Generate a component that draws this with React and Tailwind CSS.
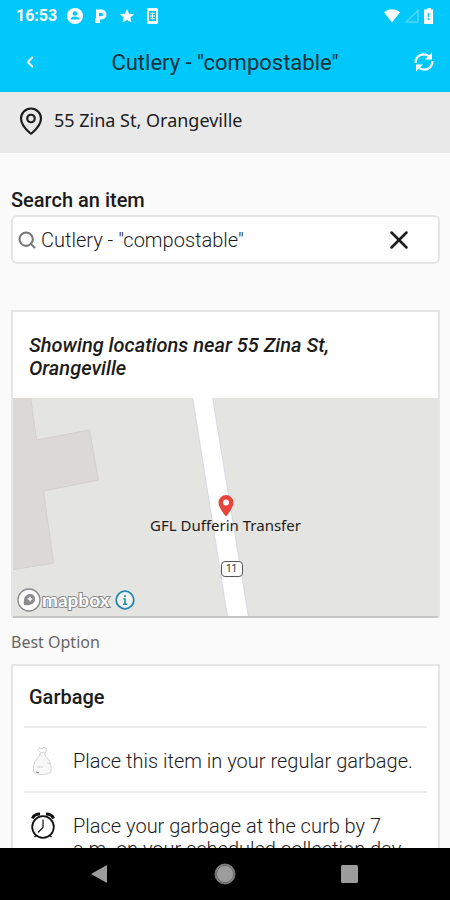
import React, { useState } from 'react';
import { ChevronLeft, MapPin, Search, X } from 'lucide-react';

const address = '55 Zina St, Orangeville';

const steps = [
    { id: 'bag', icon: <BagIcon />, text: 'Place this item in your regular garbage.' },
    { id: 'time', icon: <ClockIcon />, text: 'Place your garbage at the curb by 7 a.m. on your scheduled collection day.' },
];

function BagIcon() {
    return (
        <svg width="28" height="32" viewBox="0 0 28 32" fill="none" stroke="#d2d2d2" strokeWidth="1" aria-hidden="true">
            <path d="M11 7C9 5 9 3 11 3l2 1 2-2 3 2-2 4" />
            <path d="M11 8c1 3-4 5-6 11-1 4-1 8 1 9 4 2 11 2 15 0 2-2 1-7 0-10-1-4-6-7-5-10-2-1-3-1-5 0z" fill="#f8f8f8" />
            <path d="M8 22h6M18 18l3 1" />
            <path d="M7 27l3 1" stroke="#8f8f8f" />
        </svg>
    );
}

function ClockIcon() {
    return (
        <svg width="28" height="32" viewBox="0 0 28 32" fill="none" stroke="#111" strokeWidth="1.800" aria-hidden="true">
            <circle cx="14" cy="17" r="10.800" />
            <path d="M14 9.500v8l-5 5" strokeWidth="1.200" />
            <path d="M3.500 8.500c1-3 4-4.500 7.500-4.500M24.500 8.500c-1-3-4-4.500-7.500-4.500" strokeWidth="3" />
            <path d="M7 25.500l-1.500 1.500M21 25.500l1.500 1.500" strokeWidth="1.300" />
        </svg>
    );
}

function StatusBar() {
    return (
        <div className="flex h-8 items-center justify-between px-4 text-white">
            <div className="flex items-center gap-3">
                <span className="w-[39px] text-base font-bold">16:53</span>
                <svg width="16" height="16" viewBox="0 0 16 16" aria-hidden="true">
                    <circle cx="8" cy="8" r="8" fill="#fff" />
                    <circle cx="8" cy="5.500" r="2.300" fill="#00c8fa" />
                    <path d="M3.500 11.500c0-2 2-3 4.500-3s4.500 1 4.500 3z" fill="#00c8fa" />
                </svg>
                <svg width="12" height="16" viewBox="0 0 12 16" aria-hidden="true">
                    <path d="M1 1.500h5.500a5 5 0 0 1 0 10H5V15H0v-4.500h1z" fill="#fff" />
                    <path d="M4 5h2.500a1.500 1.500 0 0 1 0 3.200H4z" fill="#00c8fa" />
                </svg>
                <svg width="16" height="16" viewBox="0 0 16 16" fill="#fff" aria-hidden="true">
                    <path d="M8 1l2.100 4.700 5.100.500-3.900 3.400 1.200 5L8 12l-4.500 2.600 1.200-5L.8 6.200l5.100-.5z" />
                </svg>
                <svg width="12" height="16" viewBox="0 0 12 16" fill="none" aria-hidden="true">
                    <rect x="0" y="0" width="11" height="16" rx="1.500" fill="#fff" />
                    <rect x="2" y="3" width="7" height="10" fill="#00c8fa" />
                    <path d="M5.500 4.500v7M3 8h5M3.500 5.500h4M3.500 10.500h4" stroke="#fff" strokeWidth="1" />
                </svg>
            </div>
            <div className="flex items-center gap-1">
                <svg width="16" height="16" viewBox="0 0 16 16" fill="#fff" aria-hidden="true">
                    <path d="M0 4.200C4.500.2 11.500.2 16 4.200L8 14.500z" />
                </svg>
                <svg width="16" height="16" viewBox="0 0 16 16" fill="none" stroke="#4dd8fc" strokeWidth="1.500" aria-hidden="true">
                    <path d="M2 14L14 2.500V14z" />
                </svg>
                <svg width="10" height="16" viewBox="0 0 10 16" aria-hidden="true">
                    <path d="M3 0h4v1.500h2V16H0V1.500h3z" fill="#fff" />
                    <path d="M4.500 5v4M4.500 10v2" stroke="#00c8fa" strokeWidth="1.700" />
                </svg>
            </div>
        </div>
    );
}

function Header() {
    return (
        <header className="bg-[#00c8fa]">
            <StatusBar />
            <div className="grid h-[60px] grid-cols-[60px_1fr_60px] items-center">
                <button type="button" aria-label="Back" className="flex justify-center text-white">
                    <ChevronLeft size={18} strokeWidth={2.5} />
                </button>
                <h1 className="text-center text-[22px] text-[#12313b]">Cutlery - "compostable"</h1>
                <button type="button" aria-label="Refresh" className="flex justify-end pr-4 text-white">
                    <svg width="20" height="20" viewBox="0 0 20 20" fill="none" stroke="currentColor" strokeWidth="2.200" aria-hidden="true">
                        <path d="M1.500 11C1.500 4 9-.5 15.500 4.500" />
                        <path d="M18.500 9c0 7-7.500 11.500-14 6.500" />
                        <path d="M18 .5v7h-7zM2 19.500v-7h7z" fill="currentColor" stroke="none" />
                    </svg>
                </button>
            </div>
        </header>
    );
}

function LocationMap() {
    return (
        <div className="relative h-[220px] overflow-hidden border-b-2 border-[#c4c4c4] bg-[#e4e4e0]">
            <svg className="h-full w-full" viewBox="0 0 426 218" preserveAspectRatio="xMidYMid slice" aria-hidden="true">
                <path d="M-1-1H18l6 43 53-10 9 50-55 11 10 72-42 7z" fill="#dcd8d5" stroke="#d4d0ce" />
                <path d="M180-1h20l36 220h-21z" fill="#fff" stroke="#d8d8e4" />
            </svg>
            {/* Marker */}
            <div className="absolute inset-x-0 top-[97px] flex flex-col items-center">
                <svg width="16" height="22" viewBox="0 0 16 22" aria-hidden="true">
                    <path d="M8 0a7.500 7.500 0 0 0-7.500 7.500C.5 13 8 21.500 8 21.500S15.500 13 15.500 7.500A7.500 7.500 0 0 0 8 0z" fill="#e7453c" />
                    <circle cx="8" cy="7.500" r="3" fill="#fff" />
                </svg>
                <span className="font-['Noto_Sans',sans-serif] text-[15px] leading-4 text-[#1c1c1c]">GFL Dufferin Transfer</span>
            </div>
            {/* Route shield */}
            <div className="absolute inset-x-0 top-[163px] flex justify-center pl-3">
                <span className="w-[22px] rounded border border-[#555] bg-white text-center text-[10px] leading-[14px] text-[#333]">11</span>
            </div>
            <div className="absolute bottom-1 left-1 flex items-center">
                <svg width="24" height="24" viewBox="0 0 24 24" aria-hidden="true">
                    <circle cx="12" cy="12" r="11" fill="#fff" stroke="#8a8a8a" strokeWidth="1.300" />
                    <path d="M7 17c-1-6 1-11 6-11 3 0 5 2 5 5 0 5-5 7-11 6z" fill="#8a8a8a" />
                    <path d="M13 8l1 2 2 1-2 1-1 2-1-2-2-1 2-1z" fill="#fff" />
                </svg>
                <span className="w-[74px] pl-px font-[Lato,sans-serif] text-[19px] leading-6 font-bold text-white [-webkit-text-stroke:2px_#8a8a8a] [paint-order:stroke_fill]">mapbox</span>
                <button type="button" aria-label="Map information" className="text-[#2388ad]">
                    <svg width="20" height="20" viewBox="0 0 20 20" fill="none" stroke="currentColor" strokeWidth="1.800" aria-hidden="true">
                        <circle cx="10" cy="10" r="8.800" fill="#f0f3f2" />
                        <path d="M10 5v2M8.500 9H10v5M8 14.200h4" strokeWidth="1.600" />
                    </svg>
                </button>
            </div>
        </div>
    );
}

function NavBar() {
    return (
        <nav className="flex h-[52px] shrink-0 items-center justify-center gap-[104px] bg-black text-[#9c9c9c]">
            <button type="button" aria-label="Back">
                <svg width="20" height="22" viewBox="0 0 20 22" fill="currentColor" aria-hidden="true"><path d="M17 2v18L1 11z" /></svg>
            </button>
            <button type="button" aria-label="Home">
                <svg width="22" height="22" viewBox="0 0 22 22" aria-hidden="true">
                    <circle cx="11" cy="11" r="10" fill="#8c8c8c" stroke="#777" />
                    <circle cx="11" cy="11" r="8.500" fill="currentColor" stroke="#555" strokeWidth=".7" />
                </svg>
            </button>
            <button type="button" aria-label="Recent apps">
                <svg width="20" height="22" viewBox="0 0 20 22" fill="currentColor" aria-hidden="true"><rect x="1" y="2" width="17" height="18" rx="1.500" /></svg>
            </button>
        </nav>
    );
}

export default function App() {
    const [query, setQuery] = useState('Cutlery - "compostable"');

    return (
        <div className="flex h-screen flex-col bg-[#fafafa] font-[Roboto,sans-serif] text-[#1c1c1c]">
            <Header />

            <div className="flex h-[61px] shrink-0 items-center gap-2 bg-[#e9e9e9] px-4 pb-1 font-['Noto_Sans',sans-serif] text-[18px]">
                <MapPin size={30} strokeWidth={1.75} />
                <span>{address}</span>
            </div>

            <main className="min-h-0 flex-1 overflow-y-auto pt-9 pr-[10px] pl-[11px] [scrollbar-width:none]">
                <label htmlFor="item" className="block text-[20px] leading-[22px] font-medium">Search an item</label>
                <div className="mt-1 flex h-[49px] items-center rounded-md border-2 border-[#e6e6e6] bg-white pr-6 pl-1">
                    <Search size={20} strokeWidth={2.5} className="shrink-0 text-[#777]" />
                    <input
                        id="item"
                        type="text"
                        value={query}
                        onChange={(e) => setQuery(e.target.value)}
                        className="min-w-0 flex-1 px-1 text-[20px] font-light outline-none"
                    />
                    <button type="button" aria-label="Clear" onClick={() => setQuery('')}>
                        <X size={30} strokeWidth={2} />
                    </button>
                </div>

                <section className="mt-[46px] border-2 border-b-0 border-[#e6e6e6] bg-white">
                    <h2 className="px-4 pt-[22px] pb-[18px] text-[20px] leading-[23px] font-medium italic">
                        Showing locations near {address}
                    </h2>
                    <LocationMap />
                </section>

                <p className="pt-[14px] pb-3 font-['Noto_Sans',sans-serif] text-base leading-5 text-[#666]">Best Option</p>

                <section className="border-2 border-[#e6e6e6] bg-white px-[11px]">
                    <h2 className="px-[5px] pt-5 pb-[17px] text-[20px] leading-[23px] font-medium">Garbage</h2>
                    <ul>
                        {steps.map((step) => (
                            <li key={step.id} className="flex gap-4 border-t-2 border-[#ececec] pt-[22px] pr-3 pb-[18px] pl-[5px]">
                                <span className="-my-[5px] shrink-0">{step.icon}</span>
                                <span className="text-[20px] leading-[23px] font-light">{step.text}</span>
                            </li>
                        ))}
                    </ul>
                </section>
            </main>

            <NavBar />
        </div>
    );
}
